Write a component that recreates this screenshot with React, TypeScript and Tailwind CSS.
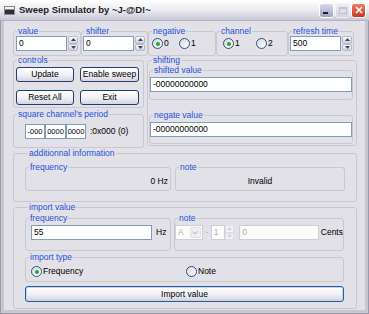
import React from "react";

type Kids = { children?: React.ReactNode; className?: string };

function Group({ label, className = "", children }: Kids & { label: string }) {
	return (
		<fieldset className={`min-w-0 rounded-[3px] border border-[#c9c8d1] ${className}`}>
			<legend className="ml-[3px] px-[1px] text-[8.5px] leading-[9px] text-[#1f50d8]">{label}</legend>
			{children}
		</fieldset>
	);
}

function Field({ value, className = "", disabled = false }: { value: string; className?: string; disabled?: boolean }) {
	return (
		<div
			className={`flex items-center h-[15px] border whitespace-nowrap overflow-hidden ${
				disabled ? "border-[#c9d0da] bg-[#fbfbfa] text-[#b4b2a7]" : "border-[#7f9db9] bg-white text-black"
			} ${className}`}
		>
			{value}
		</div>
	);
}

function Arrow({ up, color }: { up?: boolean; color: string }) {
	return (
		<svg width="5" height="3" viewBox="0 0 5 3">
			<path d={up ? "M0 3L2.5 0L5 3Z" : "M0 0L2.5 3L5 0Z"} fill={color} />
		</svg>
	);
}

function Spin({ disabled = false, className = "" }: { disabled?: boolean; className?: string }) {
	const btn = disabled
		? "border-[#dedfe6] bg-[#f3f3f5]"
		: "border-[#b5b9cc] bg-gradient-to-b from-[#fdfdfe] to-[#cdd0df]";
	const c = disabled ? "#cfd0d6" : "#3a4460";
	return (
		<div className={`flex flex-col w-[10px] h-[15px] ${className}`}>
			<div className={`flex-1 flex items-center justify-center rounded-[2px] border ${btn}`}>
				<Arrow up color={c} />
			</div>
			<div className={`flex-1 flex items-center justify-center rounded-[2px] border ${btn}`}>
				<Arrow color={c} />
			</div>
		</div>
	);
}

function Radio({ label, checked = false, className = "" }: { label: string; checked?: boolean; className?: string }) {
	return (
		<div className={`flex items-center gap-[1px] ${className}`}>
			<span className="flex items-center justify-center w-[11px] h-[11px] rounded-full border border-[#2a5289] bg-gradient-to-br from-[#d8d8de] to-white">
				{checked && <span className="w-[4px] h-[4px] rounded-full bg-[#24a924]" />}
			</span>
			<span>{label}</span>
		</div>
	);
}

function Btn({ children, className = "" }: Kids) {
	return (
		<div
			className={`flex items-center justify-center rounded-[3px] border border-[#213e6e] bg-gradient-to-b from-white via-[#f2f2f6] to-[#d5d4e2] ${className}`}
		>
			{children}
		</div>
	);
}

function TitleButtons() {
	return (
		<div className="flex gap-[1px] pr-[3px]">
			<div className="w-[15px] h-[15px] rounded-[3px] border border-white bg-gradient-to-b from-[#d9dbe9] to-[#9ea2bf] flex items-end pl-[3px] pb-[3px]">
				<div className="w-[5px] h-[2px] bg-[#1c1c2c]" />
			</div>
			<div className="w-[15px] h-[15px] rounded-[3px] border border-[#f4f4f8] bg-gradient-to-b from-[#eeeef4] to-[#d2d2dd] flex items-center justify-center">
				<div className="w-[8px] h-[7px] border border-[#c2c2cf] border-t-2" />
			</div>
			<div className="w-[15px] h-[15px] rounded-[3px] border border-white bg-gradient-to-b from-[#ee7a62] to-[#c6381f] flex items-center justify-center">
				<svg width="8" height="8" viewBox="0 0 8 8">
					<path d="M1 1L7 7M7 1L1 7" stroke="white" strokeWidth="1.6" />
				</svg>
			</div>
		</div>
	);
}

export default function App() {
	return (
		<div className="w-[369px] h-[314px] flex flex-col overflow-hidden font-['Liberation_Sans',Arial,sans-serif] text-[8.5px] text-black">
			<div className="h-[21px] shrink-0 flex items-center justify-between bg-gradient-to-b from-white via-[#ebebf1] to-[#c9c8d6] border-b border-[#b3b2c2]">
				<div className="flex items-center">
					<svg width="11" height="9" viewBox="0 0 11 9" className="ml-[4px]">
						<rect x="0" y="0" width="11" height="9" fill="#8a8a90" />
						<rect x="1" y="1" width="9" height="2" fill="#f2f2f2" />
						<rect x="1" y="4" width="9" height="4" fill="#303034" />
					</svg>
					<span className="ml-[4px] font-bold text-[9.5px] text-[#1c1c24]">Sweep Simulator by ~J-@D!~</span>
				</div>
				<TitleButtons />
			</div>

			<div className="flex-1 flex flex-col bg-[#c8c7d1] border-x border-b border-[#9b9aaa] px-[3px] pb-[3px]">
				<div className="flex-1 flex flex-col bg-[#e2e1e7] pt-[6px] pl-[9px]">
					{/* top row */}
					<div className="flex">
						<Group label="value" className="w-[68px] h-[29px]">
							<div className="flex pl-[2px]">
								<Field value="0" className="w-[51px] pl-[2px]" />
								<Spin className="ml-[1px]" />
							</div>
						</Group>
						<Group label="shifter" className="w-[67px] h-[29px]">
							<div className="flex pl-[1px]">
								<Field value="0" className="w-[51px] pl-[2px]" />
								<Spin className="ml-[1px]" />
							</div>
						</Group>
						<Group label="negative" className="w-[68px] h-[29px]">
							<div className="flex items-center h-[15px] pl-[3px]">
								<Radio label="0" checked className="w-[27px]" />
								<Radio label="1" />
							</div>
						</Group>
						<Group label="channel" className="w-[72px] h-[29px]">
							<div className="flex items-center h-[15px] pl-[6px]">
								<Radio label="1" checked className="w-[33px]" />
								<Radio label="2" />
							</div>
						</Group>
						<Group label="refresh time" className="w-[66px] h-[29px]">
							<div className="flex pl-[1px]">
								<Field value="500" className="w-[51px] pl-[2px]" />
								<Spin className="ml-[1px]" />
							</div>
						</Group>
					</div>

					{/* controls + shifting */}
					<div className="flex gap-[3px]">
						<div className="flex flex-col w-[131px]">
							<Group label="controls" className="h-[52px]">
								<div className="grid grid-cols-[58px_59px] gap-x-[6px] gap-y-[8px] pl-[2px] mt-[2px]">
									<Btn className="h-[15px]">Update</Btn>
									<Btn className="h-[15px]">Enable sweep</Btn>
									<Btn className="h-[15px]">Reset All</Btn>
									<Btn className="h-[15px]">Exit</Btn>
								</div>
							</Group>
							<Group label="square channel's period" className="h-[38px] mt-[2px]">
								<div className="flex items-center pl-[11px] mt-[5px]">
									<Field value="-000" className="w-[20px] h-[13px] justify-center text-[7.5px]" />
									<Field value="0000" className="w-[21px] h-[13px] justify-center text-[7.5px]" />
									<Field value="0000" className="w-[20px] h-[13px] justify-center text-[7.5px]" />
									<span className="ml-[4px]">:0x000 (0)</span>
								</div>
							</Group>
						</div>
						<Group label="shifting" className="w-[210px] h-[90px] pl-[1px]">
							<Group label="shifted value" className="w-[204px] h-[34px] mt-[1px]">
								<Field value="-00000000000" className="w-[202px] mt-[2px] pl-[2px]" />
							</Group>
							<Group label="negate value" className="w-[204px] h-[33px] mt-[11px]">
								<Field value="-00000000000" className="w-[202px] mt-[2px] pl-[2px]" />
							</Group>
						</Group>
					</div>

					{/* additional information */}
					<Group label="additionnal information" className="w-[344px] h-[53px] mt-[1px] pl-[11px]">
						<div className="flex gap-[4px] mt-[5px]">
							<Group label="frequency" className="w-[146px] h-[28px]">
								<div className="flex items-center justify-end h-[18px] pr-[2px]">0 Hz</div>
							</Group>
							<Group label="note" className="w-[170px] h-[28px]">
								<div className="flex items-center justify-center h-[18px]">Invalid</div>
							</Group>
						</div>
					</Group>

					{/* import value */}
					<Group label="import value" className="w-[344px] h-[106px] mt-[1px] pl-[11px]">
						<div className="flex gap-[3px] mt-[2px]">
							<Group label="frequency" className="w-[146px] h-[37px]">
								<div className="flex items-center pl-[5px] mt-[2px]">
									<Field value="55" className="w-[121px] pl-[2px]" />
									<span className="ml-[4px]">Hz</span>
								</div>
							</Group>
							<Group label="note" className="w-[170px] h-[37px]">
								<div className="flex items-center mt-[2px]">
									<div className="flex w-[28px] h-[15px] border border-[#c9d0da] bg-[#fbfbfa]">
										<span className="flex-1 pl-[2px] text-[#b4b2a7] leading-[13px]">A</span>
										<div className="w-[11px] m-[1px] rounded-[2px] border border-[#dedfe6] bg-[#f0f0f3] flex items-center justify-center">
											<svg width="6" height="4" viewBox="0 0 6 4">
												<path d="M0.5 0.5L3 3L5.5 0.5" stroke="#c4c5cd" strokeWidth="1.2" fill="none" />
											</svg>
										</div>
									</div>
									<span className="ml-[3px] text-[#b4b2a7]">-</span>
									<Field value="1" disabled className="w-[14px] ml-[2px] pl-[2px]" />
									<Spin disabled className="w-[9px]" />
									<Field value="0" disabled className="w-[80px] ml-[5px] pl-[2px]" />
									<span className="ml-[2px]">Cents</span>
								</div>
							</Group>
						</div>
						<Group label="import type" className="w-[319px] h-[29px] mt-[2px]">
							<div className="flex items-center h-[15px] pl-[5px] mt-[2px]">
								<Radio label="Frequency" checked className="w-[155px]" />
								<Radio label="Note" />
							</div>
						</Group>
						<div className="w-[319px] h-[16px] mt-[4px] flex items-center justify-center rounded-[3px] border border-[#2d5a94] bg-gradient-to-b from-white via-[#f1f1f6] to-[#d3d2e2] shadow-[inset_0_0_0_1px_#c5d5ef]">
							Import value
						</div>
					</Group>
				</div>
			</div>
		</div>
	);
}
